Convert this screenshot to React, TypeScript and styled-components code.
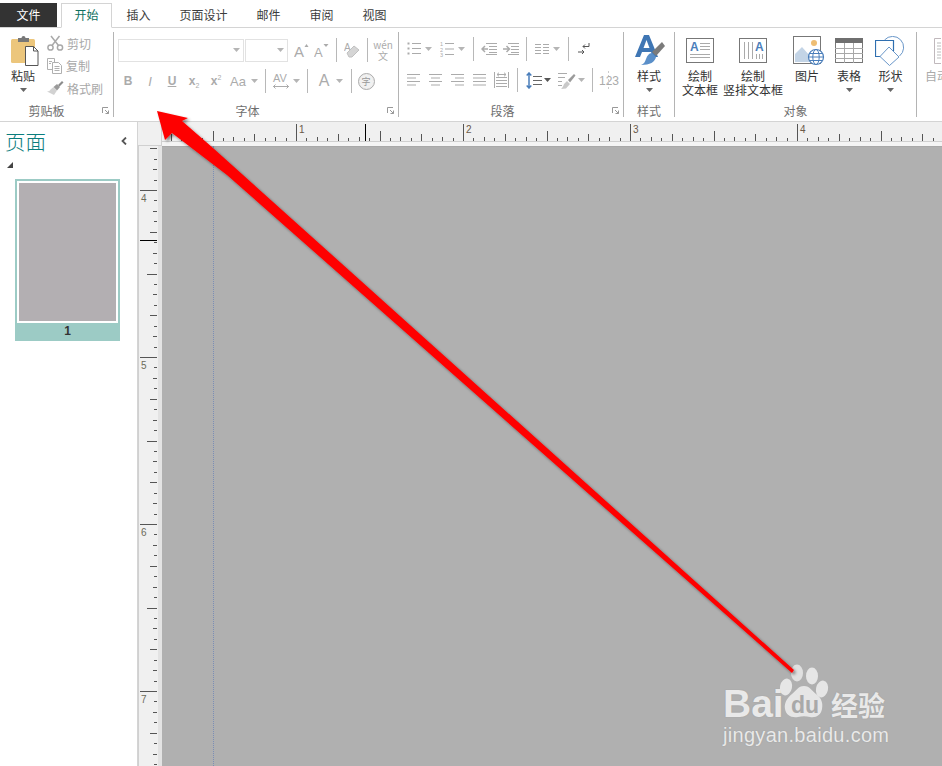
import React from 'react'
import styled, { createGlobalStyle } from 'styled-components'

const GlobalStyle = createGlobalStyle`
  html, body { margin: 0; padding: 0; background: #fff; }
  body { font-family: "Noto Sans CJK SC", "Liberation Sans", sans-serif; }
`

const G = '#ababab'
const B = '#4a7ebb'
const CJK = '"Noto Sans CJK SC", "Liberation Sans", sans-serif'

const Page = styled.div`
  position: relative;
  width: 942px;
  height: 766px;
  overflow: hidden;
  display: flex;
  flex-direction: column;
  background: #fff;
  font-family: ${CJK};
  font-size: 12px;
  color: #333;
`

/* tabs */
const TabBar = styled.div`
  display: flex;
  height: 27px;
  padding-top: 3px;
  box-sizing: border-box;
  flex: none;
`
const FileTab = styled.div`
  width: 57px;
  background: #333;
  color: #fff;
  display: flex;
  align-items: center;
  justify-content: center;
  padding-bottom: 2px;
  box-sizing: border-box;
`
const ActiveTab = styled.div`
  width: 51px;
  margin-left: 4px;
  height: 25px;
  box-sizing: border-box;
  border: 1px solid #d4d4d4;
  border-bottom: 1px solid #fff;
  background: #fff;
  color: #0e7060;
  display: flex;
  align-items: center;
  justify-content: center;
  padding-bottom: 2px;
  position: relative;
  z-index: 1;
`
const Tab = styled.div`
  padding: 0 14.5px 2px;
  display: flex;
  align-items: center;
  color: #3c3c3c;
`

/* ribbon */
const Ribbon = styled.div`
  display: flex;
  height: 95px;
  box-sizing: border-box;
  flex: none;
  border-top: 1px solid #d4d4d4;
  border-bottom: 1px solid #d4d4d4;
  padding-top: 4px;
`
const Group = styled.div<{ $w: number; $last?: boolean }>`
  width: ${p => p.$w}px;
  flex: none;
  height: 85px;
  box-sizing: border-box;
  border-right: ${p => (p.$last ? 'none' : '1px solid #b4b4b4')};
  display: flex;
  flex-direction: column;
`
const GroupBody = styled.div<{ $col?: boolean }>`
  flex: 1;
  display: flex;
  flex-direction: ${p => (p.$col ? 'column' : 'row')};
  min-height: 0;
`
const GroupFoot = styled.div<{ $pr?: number }>`
  height: 14px;
  margin-bottom: -1px;
  padding-right: ${p => p.$pr ?? 0}px;
  display: flex;
  justify-content: center;
  align-items: center;
  line-height: 14px;
  color: #6e6e6e;
  white-space: nowrap;
  position: relative;
`
const LauncherBox = styled.span`
  position: absolute;
  right: 4px;
  top: 3px;
  display: flex;
`
const BigBtn = styled.div<{ $w: number }>`
  width: ${p => p.$w}px;
  flex: none;
  display: flex;
  flex-direction: column;
  align-items: center;
`
const BigIcon = styled.div<{ $pl?: number }>`
  height: 37px;
  padding-left: ${p => p.$pl ?? 0}px;
  display: flex;
  align-items: center;
  justify-content: center;
`
const BigLabel = styled.div<{ $off?: boolean }>`
  line-height: 14px;
  white-space: nowrap;
  color: ${p => (p.$off ? '#aaa' : '#333')};
`
const CaretRow = styled.div`
  height: 14px;
  display: flex;
  align-items: center;
`
const SmallList = styled.div`
  margin-left: 1px;
  display: flex;
  flex-direction: column;
`
const SmallRow = styled.div`
  height: 22.5px;
  display: flex;
  align-items: center;
  gap: 3px;
  color: #a8a8a8;
`
const ToolRow = styled.div<{ $pl?: number; $mt?: number }>`
  display: flex;
  align-items: center;
  height: 24px;
  margin-top: ${p => p.$mt ?? 0}px;
  padding-left: ${p => p.$pl ?? 0}px;
`
const Combo = styled.div<{ $w: number }>`
  width: ${p => p.$w}px;
  height: 23px;
  flex: none;
  box-sizing: border-box;
  border: 1px solid #e2e2e2;
  margin-right: 1px;
  display: flex;
  align-items: center;
  justify-content: flex-end;
  padding-right: 3px;
`
const Cell = styled.div<{ $w: number; $ml?: number }>`
  width: ${p => p.$w}px;
  margin-left: ${p => p.$ml ?? 0}px;
  flex: none;
  display: flex;
  align-items: center;
  justify-content: center;
  color: ${G};
  line-height: 1;
`
const Glyph = styled.span<{ $i?: boolean; $u?: boolean; $size?: number; $bold?: boolean }>`
  font-family: "Liberation Sans", sans-serif;
  font-size: ${p => p.$size ?? 12}px;
  font-weight: ${p => (p.$bold ? 700 : 400)};
  font-style: ${p => (p.$i ? 'italic' : 'normal')};
  text-decoration: ${p => (p.$u ? 'underline' : 'none')};
  color: ${G};
`
const Sub = styled.sub`
  font-size: 7px;
  line-height: 0;
  font-weight: 400;
`
const Sup = styled.sup`
  font-size: 7px;
  line-height: 0;
  font-weight: 400;
`
const Wen = styled.div`
  display: flex;
  flex-direction: column;
  align-items: center;
  font-size: 10px;
  line-height: 11px;
  color: ${G};
`
const Sep = styled.div<{ $ml?: number; $h?: number }>`
  width: 1px;
  flex: none;
  height: ${p => p.$h ?? 24}px;
  margin-left: ${p => p.$ml ?? 0}px;
  background: #b8b8b8;
`
const CircleChar = styled.div`
  width: 15px;
  height: 15px;
  border: 1px solid ${G};
  box-shadow: inset 0 0 0 1px #eee;
  background: #f1f1f1;
  border-radius: 50%;
  font-size: 9px;
  line-height: 11px;
  color: #999;
  display: flex;
  align-items: center;
  justify-content: center;
`

/* main area */
const Main = styled.div`
  flex: 1;
  display: flex;
  min-height: 0;
`
const Sidebar = styled.aside`
  width: 138px;
  flex: none;
  box-sizing: border-box;
  border-right: 1px solid #d4d4d4;
  background: #fff;
`
const SideHead = styled.div`
  height: 38px;
  padding: 0 10px 0 5px;
  display: flex;
  align-items: center;
  justify-content: space-between;
`
const SideTitle = styled.div`
  font-size: 20.5px;
  font-weight: 300;
  color: #0a7d7d;
  line-height: 38px;
`
const Disclosure = styled.div`
  width: 0;
  height: 0;
  margin: 2px 0 0 7px;
  border-left: 6px solid transparent;
  border-bottom: 6px solid #444;
`
const Thumb = styled.div`
  margin: 11px 0 0 15px;
  width: 105px;
  height: 162px;
  background: #9ccbc5;
  padding: 2px;
  box-sizing: border-box;
  display: flex;
  flex-direction: column;
`
const ThumbPage = styled.div`
  height: 142px;
  box-sizing: border-box;
  border: 2px solid #fff;
  background: #b3afb2;
`
const ThumbNum = styled.div`
  flex: 1;
  display: flex;
  align-items: center;
  justify-content: center;
  font-family: "Liberation Sans", sans-serif;
  font-weight: 700;
  font-size: 12px;
  color: #333;
`
const Workspace = styled.div`
  flex: 1;
  display: flex;
  flex-direction: column;
  min-width: 0;
`
const TopRuler = styled.div`
  height: 24px;
  flex: none;
  display: flex;
  background: #f0f0f0;
`
const Corner = styled.div`
  width: 24px;
  flex: none;
  box-sizing: border-box;
  border-right: 1px solid #d0d0d0;
  border-bottom: 1px solid #d0d0d0;
`
const Lower = styled.div`
  flex: 1;
  display: flex;
  min-height: 0;
`
const SideRuler = styled.div`
  width: 24px;
  flex: none;
  background: #f0f0f0;
  display: flex;
`
const Canvas = styled.div`
  flex: 1;
  background: #b0b0b0;
  box-shadow: inset 0 1px 0 #a8a8a8;
  display: flex;
`
const Guide = styled.div`
  margin-left: 51px;
  border-left: 1px dotted #6f86b8;
  opacity: 0.8;
`

/* overlays */
const ArrowLayer = styled.svg`
  position: absolute;
  left: 0;
  top: 0;
  pointer-events: none;
`
const Mark = styled.div`
  position: absolute;
  left: 723px;
  top: 665px;
  width: 170px;
  color: #e9e9e9;
  text-shadow: 0 0 1px rgba(120, 120, 120, 0.5);
`
const MarkRow = styled.div`
  display: flex;
  align-items: flex-end;
  height: 55px;
`
const MarkBai = styled.span`
  font-family: "Liberation Sans", sans-serif;
  font-size: 39px;
  font-weight: 700;
  line-height: 44px;
  margin-bottom: -6px;
  width: 59px;
`
const Paw = styled.div`
  position: relative;
  width: 52px;
  height: 56px;
  margin-left: -4px;
  flex: none;
`
const MarkDu = styled.span`
  position: absolute;
  left: 13px;
  top: 29px;
  font-family: "Liberation Sans", sans-serif;
  font-size: 23px;
  font-weight: 700;
  line-height: 24px;
  color: #a9a9a9;
  text-shadow: none;
`
const MarkCn = styled.span`
  font-family: ${CJK};
  font-size: 27px;
  font-weight: 700;
  line-height: 30px;
  margin-left: 1px;
  white-space: nowrap;
`
const MarkUrl = styled.div`
  font-family: "Liberation Sans", sans-serif;
  font-size: 20px;
  line-height: 24px;
  margin-top: 3px;
  letter-spacing: 0.3px;
  white-space: nowrap;
`

const Caret = ({ c = '#b5b5b5' }: { c?: string }) => (
  <svg width="7" height="4" viewBox="0 0 7 4"><path d="M0 0h7L3.5 4z" fill={c} /></svg>
)
const Launcher = () => (
  <svg width="7" height="7" viewBox="0 0 7 7" fill="none" stroke="#999" strokeWidth="1">
    <path d="M.5 6V.5H6M3 3l3.5 3.5M6.5 3.5v3h-3" />
  </svg>
)
const Lines = ({ w, rows, c = G }: { w: number; rows: [number, number][]; c?: string }) => (
  <svg width={w} height="14" viewBox={`0 0 ${w} 14`} stroke={c} strokeWidth="1">
    {rows.map(([a, b], i) => <path key={i} d={`M${a} ${1.5 + i * 3.5}H${b}`} />)}
  </svg>
)

const PasteIcon = () => (
  <svg width="28" height="31" viewBox="0 0 28 31">
    <rect x="0" y="4" width="24" height="24" rx="1.5" fill="#ecc67c" />
    <path d="M7 7V3h3.5a2 2 0 0 1 4 0H18v4z" fill="#777" />
    <path d="M14.5 11.5h8l4.5 4.5v14.5H14.5z" fill="#fff" stroke="#555" />
    <path d="M22.5 11.5V16H27" fill="none" stroke="#555" />
  </svg>
)
const ScissorsIcon = () => (
  <svg width="17" height="16" viewBox="0 0 17 16" fill="none" stroke="#a9a9a9" strokeWidth="1.5">
    <circle cx="3.5" cy="12.5" r="2.6" />
    <circle cx="13" cy="12.5" r="2.6" />
    <path d="M5 10.5 12.5 1M11.500 10.500 4 1" />
  </svg>
)
const CopyIcon = () => (
  <svg width="16" height="16" viewBox="0 0 16 16" fill="#fff" stroke="#b0b0b0">
    <path d="M.5 .5h7v11h-7z" />
    <path d="M5.500 4.500h6l3 3v8h-9z" />
    <path d="M7.500 8.500h5M7.500 10.500h5M7.500 12.500h5M2 3.500h3M2 5.500h2" />
  </svg>
)
const BrushIcon = () => (
  <svg width="17" height="16" viewBox="0 0 17 16">
    <path d="M10 4l3 3-3 3.500L6.500 7z" fill="#9a9a9a" />
    <path d="M6.500 7 10 10.500 7 15 0 11.500c2 0 3-1 3.500-2z" fill="#d2d2d2" />
    <path d="M11 5l4-4 1.500 1.500-4 4z" fill="#8c8c8c" />
  </svg>
)
const FontBig = ({ up }: { up: boolean }) => (
  <svg width="15" height="17" viewBox="0 0 15 17">
    <text x="0" y="15" fontFamily="Liberation Sans" fontSize={up ? 15 : 13} fill={G}>A</text>
    <path d={up ? 'M10.500 5l2-3 2 3z' : 'M9.500 2h5l-2.500 3z'} fill={G} />
  </svg>
)
const EraserIcon = () => (
  <svg width="16" height="16" viewBox="0 0 16 16">
    <text x="0" y="9" fontFamily="Liberation Sans" fontSize="10" fill={G}>A</text>
    <path d="M3 11l7-7 5 4-7 7H5z" fill="#d5d5d5" stroke="#c0c0c0" />
  </svg>
)
const AvIcon = () => (
  <svg width="18" height="18" viewBox="0 0 18 18" stroke={G} fill="none">
    <text x="1" y="10" fontFamily="Liberation Sans" fontSize="11" fill={G} stroke="none">AV</text>
    <path d="M1 14.500h16M3.500 12.500l-2 2 2 2M14.500 12.500l2 2-2 2" />
  </svg>
)
const Bullets = () => (
  <svg width="14" height="14" viewBox="0 0 14 14" fill={G} stroke={G}>
    <path d="M5 1.500h9M5 6.500h9M5 11.500h9" fill="none" />
    <rect x="0.500" y="0.500" width="2" height="2" stroke="none" />
    <rect x="0.500" y="5.500" width="2" height="2" stroke="none" />
    <rect x="0.500" y="10.500" width="2" height="2" stroke="none" />
  </svg>
)
const Numbered = () => (
  <svg width="14" height="16" viewBox="0 0 14 16" stroke={G} fill="none">
    <path d="M5 2.500h9M5 8h9M5 13.500h9" />
    <text x="0" y="5" fontSize="5.500" fontFamily="Liberation Sans" fill={G} stroke="none">1</text>
    <text x="0" y="10.500" fontSize="5.500" fontFamily="Liberation Sans" fill={G} stroke="none">2</text>
    <text x="0" y="16" fontSize="5.500" fontFamily="Liberation Sans" fill={G} stroke="none">3</text>
  </svg>
)
const IndentIcon = ({ right }: { right?: boolean }) => (
  <svg width="16" height="14" viewBox="0 0 16 14" fill="none" stroke={G}>
    <path d="M5 1.500h11M8 4.500h8M8 7.500h8M8 10.500h8M5 12.500h11" />
    <path d={right ? 'M0 7h6M3.500 4l3 3-3 3' : 'M7 7H1M4 4 1 7l3 3'} strokeWidth="1.500" />
  </svg>
)
const ColumnsIcon = () => (
  <svg width="14" height="12" viewBox="0 0 14 12" stroke={G}>
    <path d="M0 1.500h6M8 1.500h6M0 4.500h6M8 4.500h6M0 7.500h6M8 7.500h6M0 10.500h6M8 10.500h6" />
  </svg>
)
const WrapIcon = () => (
  <svg width="12" height="14" viewBox="0 0 12 14" fill="none" stroke="#555">
    <path d="M11 1v3.500H5M7 2.500l-2 2 2 2" />
    <path d="M0 10h6M4 8l2 2-2 2" />
  </svg>
)
const DistIcon = () => (
  <svg width="15" height="16" viewBox="0 0 15 16" fill="none" stroke={G}>
    <path d="M.5 0v16M14.500 0v16M2 5.500h11M2 8.500h11M2 11.500h11M2 14.500h11" />
    <path d="M3 2.500h9M5 .7 3 2.500l2 1.800M10 .7l2 1.800-2 1.800" />
  </svg>
)
const LineSpacing = () => (
  <svg width="16" height="17" viewBox="0 0 16 17" fill="none">
    <path d="M3 1v15M.7 3.500 3 1l2.300 2.500M.7 13.500 3 16l2.300-2.500" stroke={B} strokeWidth="1.500" />
    <path d="M7 4.500h9M7 8.500h9M7 12.500h9" stroke="#666" />
  </svg>
)
const ShadeIcon = () => (
  <svg width="18" height="17" viewBox="0 0 18 17">
    <path d="M0 1.500h9M0 5.500h7M0 9.500h4M0 13.500h4" stroke={G} fill="none" />
    <path d="M6 12l3-3 3 3-4 4.500-5 .5c1-1 2-2 3-5z" fill="#c9c9c9" />
    <path d="M10 8l6-6 1.500 1.500-5.500 7z" fill="#9b9b9b" />
  </svg>
)
const Num123 = () => (
  <svg width="20" height="18" viewBox="0 0 20 18">
    <path d="M9.500 0v18" stroke="#ccc" strokeDasharray="2 2" />
    <text x="0" y="13.500" fontFamily="Liberation Sans" fontSize="12" fill={G}>123</text>
  </svg>
)
const StyleIcon = () => (
  <svg width="30" height="31" viewBox="0 0 30 31">
    <path d="M0 22 9 0h5l9 22h-5l-2-5H7l-2 5zM8.500 13h6L11.500 5z" fill="#3f76b4" />
    <path d="M17 17l10-10 3 4-9 10z" fill="#7b7b7b" />
    <path d="M17 18l4 4c-1 5-6 8-15 8 3-1 4-3 5-6s3-6 6-6z" fill="#5a8fc9" />
  </svg>
)
const TextboxIcon = () => (
  <svg width="28" height="26" viewBox="0 0 28 26" fill="none">
    <rect x="0.500" y="0.500" width="27" height="24" fill="#fff" stroke="#777" />
    <text x="4" y="13" fontFamily="Liberation Sans" fontWeight="700" fontSize="12" fill={B}>A</text>
    <path d="M14 5.500h10M14 8.500h10M14 11.500h10M4 16.500h20M4 19.500h20" stroke="#aaa" />
  </svg>
)
const VerticalBoxIcon = () => (
  <svg width="28" height="26" viewBox="0 0 28 26" fill="none">
    <rect x="0.500" y="0.500" width="27" height="24" fill="#fff" stroke="#777" />
    <text x="16" y="13" fontFamily="Liberation Sans" fontWeight="700" fontSize="12" fill={B}>A</text>
    <path d="M5.500 4v17M9.500 4v17M13.500 4v17M17.500 16v5M20.500 16v5M23.500 16v5" stroke="#aaa" />
  </svg>
)
const PictureWrap = styled.svg`
  overflow: visible;
`
const PictureIcon = () => (
  <PictureWrap width="28" height="29" viewBox="0 0 28 29" fill="none">
    <rect x="0.500" y="0.500" width="27" height="27" fill="#fff" stroke="#777" />
    <circle cx="21" cy="7" r="3" fill="#eebe74" />
    <path d="M2 26V18l7-7 8 9 4 6z" fill="#c3d4e6" />
    <circle cx="23" cy="21" r="7.500" fill="#fff" stroke={B} strokeWidth="1.200" />
    <ellipse cx="23" cy="21" rx="3.200" ry="7.500" stroke={B} />
    <path d="M15.500 21h15M16.500 17.500h13M16.500 24.500h13" stroke={B} />
  </PictureWrap>
)
const TableIcon = () => (
  <svg width="28" height="26" viewBox="0 0 28 26" fill="none">
    <rect x="0.500" y="0.500" width="27" height="24" fill="#fff" stroke="#777" />
    <rect x="0" y="0" width="28" height="5" fill="#6f6f6f" />
    <path d="M9.500 5v20M18.500 5v20M0 10.500h28M0 15.500h28M0 20.500h28" stroke="#a8a8a8" />
  </svg>
)
const ShapeIcon = () => (
  <svg width="31" height="30" viewBox="0 0 31 30" fill="none">
    <path d="M9.500 4A11 11 0 1 1 24.500 20" stroke="#6a97c9" />
    <path d="M18.500 15V4.500H.5V20.500H6" stroke="#2f6fb0" strokeWidth="1.200" />
    <path d="M14 11l10 10-9.500 8.500L5 20.500z" stroke="#6a97c9" fill="#fff" />
  </svg>
)
const AutoIcon = () => (
  <svg width="7" height="26" viewBox="0 0 7 26" fill="none">
    <path d="M7 .5H.5v25H7" stroke="#c0b8bc" />
    <path d="M3 5h4M3 8h4M3 11h4M3 14h4M3 17h4M3 20h4" stroke="#bbb" />
  </svg>
)
const Chevron = () => (
  <svg width="6" height="8" viewBox="0 0 6 8" fill="none" stroke="#555" strokeWidth="1.800"><path d="M5 .5 1.500 4 5 7.500" /></svg>
)

const tickLen = (i: number) => (i % 16 === 0 ? 17 : i % 8 === 0 ? 10 : i % 4 === 0 ? 7 : i % 2 === 0 ? 4 : 3)
const INCH = 167

const HRuler = () => {
  const ticks = []
  for (let i = -12; i < 90; i++) {
    const x = Math.round(134 + (i * INCH) / 16) + 0.5
    ticks.push(<path key={i} d={`M${x} ${19 - tickLen(i)}V19`} stroke="#555" />)
  }
  return (
    <svg width="780" height="24" viewBox="0 0 780 24">
      <path d="M0 19.500H780" stroke="#cfcfcf" />
      <rect x="0" y="20" width="780" height="4" fill="#f4f4f4" />
      {ticks}
      <path d="M203.500 2V19" stroke="#000" />
      {[1, 2, 3, 4].map(n => (
        <text key={n} x={134 + (n - 1) * INCH + 3} y="11" fontSize="10" fontFamily="Liberation Sans" fill="#6b5a4a">{n}</text>
      ))}
    </svg>
  )
}

const VRuler = () => {
  const ticks = []
  for (let i = -8; i < 70; i++) {
    const y = Math.round(44 + (i * INCH) / 16) + 0.5
    ticks.push(<path key={i} d={`M${19 - tickLen(i)} ${y}H19`} stroke="#555" />)
  }
  return (
    <svg width="24" height="620" viewBox="0 0 24 620">
      <rect x="20" y="0" width="4" height="620" fill="#e3e3e3" />
      <path d="M.5 0V620" stroke="#d0d0d0" />
      {ticks}
      <path d="M2 94.500H19" stroke="#000" />
      {[4, 5, 6, 7].map(n => (
        <text key={n} x="3" y={56 + (n - 4) * INCH} fontSize="10" fontFamily="Liberation Sans" fill="#6b6b5a">{n}</text>
      ))}
    </svg>
  )
}

const Arrow = () => (
  <ArrowLayer width="942" height="766" viewBox="0 0 942 766">
    <defs>
      <filter id="arrow-shadow" x="-5%" y="-5%" width="110%" height="110%">
        <feDropShadow dx="2" dy="2" stdDeviation="1.500" floodColor="#000" floodOpacity="0.45" />
      </filter>
    </defs>
    <path d="M157 111 188 118 182 121 213 148 794 670 792 673 227 175 172 133 165 140Z" fill="#fe0000" filter="url(#arrow-shadow)" />
  </ArrowLayer>
)

const Watermark = () => (
  <Mark>
    <MarkRow>
      <MarkBai>Bai</MarkBai>
      <Paw>
        <svg width="52" height="56" viewBox="0 0 52 56" fill="#e6e6e6">
          <ellipse cx="19" cy="9" rx="6" ry="8.500" opacity="0.9" />
          <ellipse cx="34" cy="12" rx="6" ry="8.500" />
          <ellipse cx="8" cy="23" rx="6" ry="8.500" transform="rotate(12 8 23)" />
          <ellipse cx="44" cy="25" rx="6" ry="8.500" transform="rotate(12 44 25)" />
          <path d="M26 22c6 0 8 5 12 8 6 4 7 10 6 15-1 6-6 9-12 8-4-1-8-1-12 0-7 1-12-2-13-8-1-6 2-11 7-15 4-3 6-8 12-8z" />
        </svg>
        <MarkDu>du</MarkDu>
      </Paw>
      <MarkCn>经验</MarkCn>
    </MarkRow>
    <MarkUrl>jingyan.baidu.com</MarkUrl>
  </Mark>
)

const App = () => (
  <>
    <GlobalStyle />
    <Page>
      <TabBar>
        <FileTab>文件</FileTab>
        <ActiveTab>开始</ActiveTab>
        <Tab>插入</Tab>
        <Tab>页面设计</Tab>
        <Tab>邮件</Tab>
        <Tab>审阅</Tab>
        <Tab>视图</Tab>
      </TabBar>

      <Ribbon>
        <Group $w={114}>
          <GroupBody>
            <BigBtn $w={46}>
              <BigIcon $pl={4}><PasteIcon /></BigIcon>
              <BigLabel>粘贴</BigLabel>
              <CaretRow><Caret c="#666" /></CaretRow>
            </BigBtn>
            <SmallList>
              <SmallRow><ScissorsIcon />剪切</SmallRow>
              <SmallRow><CopyIcon />复制</SmallRow>
              <SmallRow><BrushIcon />格式刷</SmallRow>
            </SmallList>
          </GroupBody>
          <GroupFoot $pr={20}>剪贴板<LauncherBox><Launcher /></LauncherBox></GroupFoot>
        </Group>

        <Group $w={285}>
          <GroupBody $col>
            <ToolRow $pl={4} $mt={6}>
              <Combo $w={126}><Caret /></Combo>
              <Combo $w={43}><Caret /></Combo>
              <Cell $w={20} $ml={2}><FontBig up /></Cell>
              <Cell $w={20}><FontBig up={false} /></Cell>
              <Sep $ml={5} />
              <Cell $w={30}><EraserIcon /></Cell>
              <Sep />
              <Cell $w={30}>
                <Wen>wén<span>文</span></Wen>
              </Cell>
            </ToolRow>
            <ToolRow $pl={3} $mt={7}>
              <Cell $w={22}><Glyph $bold>B</Glyph></Cell>
              <Cell $w={22}><Glyph $i $size={13}>I</Glyph></Cell>
              <Cell $w={22}><Glyph $u $bold>U</Glyph></Cell>
              <Cell $w={22}><Glyph $bold>x<Sub>2</Sub></Glyph></Cell>
              <Cell $w={22}><Glyph $bold>x<Sup>2</Sup></Glyph></Cell>
              <Cell $w={22}><Glyph $size={13}>Aa</Glyph></Cell>
              <Cell $w={10}><Caret /></Cell>
              <Sep $ml={6} />
              <Cell $w={22} $ml={4}><AvIcon /></Cell>
              <Cell $w={8}><Caret /></Cell>
              <Sep $ml={7} />
              <Cell $w={16} $ml={8}><Glyph $size={16}>A</Glyph></Cell>
              <Cell $w={8} $ml={3}><Caret /></Cell>
              <Sep $ml={8} />
              <Cell $w={28}><CircleChar>字</CircleChar></Cell>
            </ToolRow>
          </GroupBody>
          <GroupFoot $pr={17}>字体<LauncherBox><Launcher /></LauncherBox></GroupFoot>
        </Group>

        <Group $w={225}>
          <GroupBody $col>
            <ToolRow $pl={8} $mt={5}>
              <Cell $w={14}><Bullets /></Cell>
              <Cell $w={8} $ml={3}><Caret /></Cell>
              <Cell $w={14} $ml={8}><Numbered /></Cell>
              <Cell $w={8} $ml={3}><Caret /></Cell>
              <Sep $ml={8} />
              <Cell $w={16} $ml={7}><IndentIcon /></Cell>
              <Cell $w={16} $ml={6}><IndentIcon right /></Cell>
              <Sep $ml={7} />
              <Cell $w={14} $ml={8}><ColumnsIcon /></Cell>
              <Cell $w={8} $ml={3}><Caret /></Cell>
              <Sep $ml={8} />
              <Cell $w={12} $ml={9}><WrapIcon /></Cell>
            </ToolRow>
            <ToolRow $pl={8} $mt={7}>
              <Cell $w={13}><Lines w={13} rows={[[0, 13], [0, 9], [0, 13], [0, 9]]} /></Cell>
              <Cell $w={13} $ml={9}><Lines w={13} rows={[[0, 13], [2, 11], [0, 13], [2, 11]]} /></Cell>
              <Cell $w={13} $ml={9}><Lines w={13} rows={[[0, 13], [4, 13], [0, 13], [4, 13]]} /></Cell>
              <Cell $w={13} $ml={9}><Lines w={13} rows={[[0, 13], [0, 13], [0, 13], [0, 13]]} /></Cell>
              <Cell $w={15} $ml={8}><DistIcon /></Cell>
              <Sep $ml={8} />
              <Cell $w={16} $ml={8}><LineSpacing /></Cell>
              <Cell $w={8} $ml={1}><Caret c="#555" /></Cell>
              <Cell $w={18} $ml={7}><ShadeIcon /></Cell>
              <Cell $w={8} $ml={1}><Caret /></Cell>
              <Sep $ml={7} />
              <Cell $w={20} $ml={6}><Num123 /></Cell>
            </ToolRow>
          </GroupBody>
          <GroupFoot $pr={17}>段落<LauncherBox><Launcher /></LauncherBox></GroupFoot>
        </Group>

        <Group $w={51}>
          <GroupBody>
            <BigBtn $w={50}>
              <BigIcon $pl={2}><StyleIcon /></BigIcon>
              <BigLabel>样式</BigLabel>
              <CaretRow><Caret c="#666" /></CaretRow>
            </BigBtn>
          </GroupBody>
          <GroupFoot>样式</GroupFoot>
        </Group>

        <Group $w={242}>
          <GroupBody>
            <BigBtn $w={50}>
              <BigIcon><TextboxIcon /></BigIcon>
              <BigLabel>绘制</BigLabel>
              <BigLabel>文本框</BigLabel>
            </BigBtn>
            <BigBtn $w={56}>
              <BigIcon><VerticalBoxIcon /></BigIcon>
              <BigLabel>绘制</BigLabel>
              <BigLabel>竖排文本框</BigLabel>
            </BigBtn>
            <BigBtn $w={52}>
              <BigIcon><PictureIcon /></BigIcon>
              <BigLabel>图片</BigLabel>
            </BigBtn>
            <BigBtn $w={32}>
              <BigIcon><TableIcon /></BigIcon>
              <BigLabel>表格</BigLabel>
              <CaretRow><Caret c="#666" /></CaretRow>
            </BigBtn>
            <BigBtn $w={51}>
              <BigIcon><ShapeIcon /></BigIcon>
              <BigLabel>形状</BigLabel>
              <CaretRow><Caret c="#666" /></CaretRow>
            </BigBtn>
          </GroupBody>
          <GroupFoot>对象</GroupFoot>
        </Group>

        <Group $w={25} $last>
          <GroupBody>
            <BigBtn $w={40}>
              <BigIcon><AutoIcon /></BigIcon>
              <BigLabel $off>自动</BigLabel>
            </BigBtn>
          </GroupBody>
        </Group>
      </Ribbon>

      <Main>
        <Sidebar>
          <SideHead>
            <SideTitle>页面</SideTitle>
            <Chevron />
          </SideHead>
          <Disclosure />
          <Thumb>
            <ThumbPage />
            <ThumbNum>1</ThumbNum>
          </Thumb>
        </Sidebar>
        <Workspace>
          <TopRuler>
            <Corner />
            <HRuler />
          </TopRuler>
          <Lower>
            <SideRuler><VRuler /></SideRuler>
            <Canvas><Guide /></Canvas>
          </Lower>
        </Workspace>
      </Main>

      <Watermark />
      <Arrow />
    </Page>
  </>
)

export default App
